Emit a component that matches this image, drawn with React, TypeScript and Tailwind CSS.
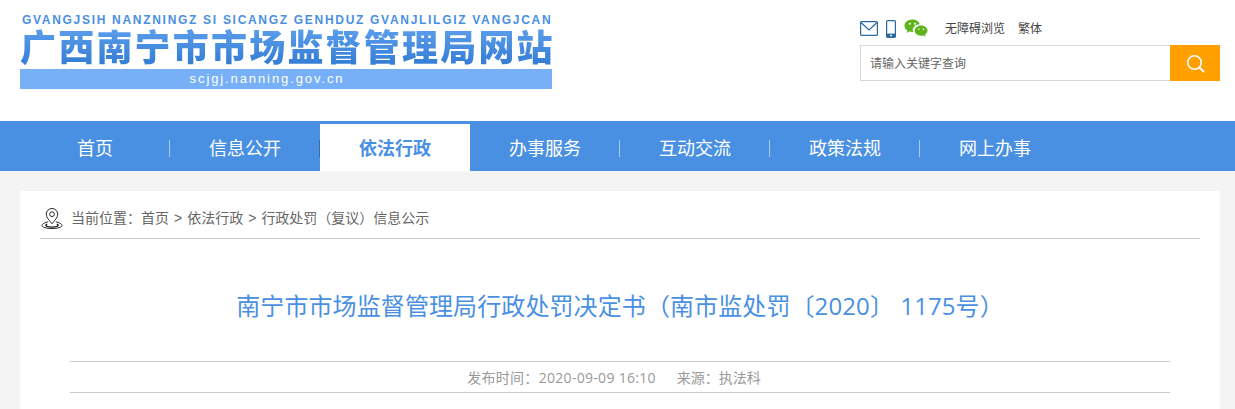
import React from 'react';

const cjk = "font-['Liberation_Sans','Noto_Sans_CJK_SC',sans-serif]";
const wide = "font-['Open_Sans','Noto_Sans_CJK_SC',sans-serif]";

const navItems = ['首页', '信息公开', '依法行政', '办事服务', '互动交流', '政策法规', '网上办事'];

const MailIcon = () => (
  <svg width="18" height="15" viewBox="0 0 18 15" fill="none" stroke="#2a6a9e" strokeWidth="1.2">
    <rect x="0.6" y="0.6" width="16.8" height="13.8" rx="1" />
    <path d="M1 1.5 L9 9 L17 1.5" />
  </svg>
);

const PhoneIcon = () => (
  <svg width="10" height="18" viewBox="0 0 10 18" fill="none">
    <rect x="0.6" y="0.6" width="8.8" height="16.8" rx="1.2" stroke="#2a6a9e" strokeWidth="1.2" />
    <rect x="0.6" y="13.6" width="8.8" height="3.8" fill="#2a6a9e" />
    <circle cx="5" cy="15.5" r="0.9" fill="#fff" />
  </svg>
);

const WechatIcon = () => (
  <svg width="24" height="19" viewBox="0 0 24 19">
    <path d="M8.5 0.5C4 0.5 0.5 3.3 0.5 6.8c0 2 1.2 3.7 3 4.9l-0.8 2.3 2.8-1.4c1 0.3 2 0.4 3 0.4h0.6c-0.2-0.6-0.3-1.2-0.3-1.8 0-3.3 3.1-5.9 7-6C14.900 2.500 12 0.500 8.500 0.500z" fill="#5fb41c" />
    <path d="M23.500 11.600c0-2.900-2.900-5.200-6.400-5.200s-6.400 2.300-6.400 5.200 2.900 5.200 6.400 5.200c0.800 0 1.500-0.100 2.200-0.300l2.200 1.300-0.600-2c1.600-1 2.600-2.500 2.600-4.200z" fill="#5fb41c" />
    <circle cx="5.800" cy="4.800" r="1" fill="#fff" />
    <circle cx="11" cy="4.800" r="1" fill="#fff" />
    <circle cx="14.800" cy="10.200" r="0.8" fill="#fff" />
    <circle cx="19.400" cy="10.200" r="0.8" fill="#fff" />
  </svg>
);

const PinIcon = () => (
  <svg width="22" height="21" viewBox="0 0 23 22" fill="none" stroke="#222" strokeWidth="1">
    <path d="M11.500 16.500C9 13 5.500 10.500 5.500 6.500a6 6 0 0 1 12 0c0 4-3.500 6.500-6 10z" />
    <circle cx="11.500" cy="6.500" r="2.500" />
    <path d="M7.500 14.500C4 15.300 1 16.500 1 18.300c0 2 4.700 3.200 10.500 3.200S22 20.300 22 18.300c0-1.800-3-3-6.500-3.800" />
    <path d="M6.500 17c-1 .4-1.500.8-1.500 1.200 0 1 3 1.800 6.500 1.800s6.500-.8 6.500-1.800c0-.4-.5-.8-1.500-1.200" strokeWidth="1.500" />
  </svg>
);

const SearchIcon = () => (
  <svg width="19" height="19" viewBox="0 0 19 19" fill="none" stroke="#fff" strokeWidth="1.600" strokeLinecap="round">
    <circle cx="8.500" cy="8.500" r="6.800" />
    <path d="M13.500 13.500 L17.500 17.500" strokeWidth="2" />
  </svg>
);

export default function App() {
  return (
    <div className={`h-[409px] overflow-hidden bg-[#f4f4f4] ${cjk}`}>
      <header className="h-[121px] bg-white flex justify-between pl-5 pr-[15px]">
        <div className="w-[532px] pt-[13px]">
          <div className="h-[14px] pl-[2px] leading-[14px] text-[12px] font-bold text-[#4a90e2] tracking-[1.7px] whitespace-nowrap">
            GVANGJSIH NANZNINGZ SI SICANGZ GENHDUZ GVANJLILGIZ VANGJCAN
          </div>
          <div className="h-[42px] leading-[44px] text-[36px] font-black tracking-[2.2px] whitespace-nowrap bg-gradient-to-b from-[#5c9fec] to-[#2f79d2] bg-clip-text text-transparent">
            广西南宁市市场监督管理局网站
          </div>
          <div className="h-5 leading-5 pr-[38px] bg-[#78b0f7] text-white text-center text-[13px] font-medium tracking-[1.9px]">
            scjgj.nanning.gov.cn
          </div>
        </div>
        <div className="w-[360px] pt-5">
          <div className="h-[17px] flex items-center text-[12px] text-[#444]">
            <MailIcon />
            <span className="ml-[8px] flex"><PhoneIcon /></span>
            <span className="ml-[8px] flex"><WechatIcon /></span>
            <span className="ml-[17px]">无障碍浏览</span>
            <span className="ml-[13px]">繁体</span>
          </div>
          <div className="mt-2 h-9 flex">
            <div className="flex-1 border border-[#d8d8d8] border-r-0 flex items-center pl-[9px] pt-px text-[12px] text-[#666]">
              请输入关键字查询
            </div>
            <button className="w-[50px] bg-[#ff9f00] flex items-center justify-center">
              <SearchIcon />
            </button>
          </div>
        </div>
      </header>

      <nav className="h-[50px] bg-[#4a90e2] flex pl-5">
        {navItems.map((item, i) => (
          <div key={item} className="relative w-[150px] h-full">
            {i === 2 ? (
              <div className="mt-[3px] h-[47px] pt-[4px] bg-white flex items-center justify-center text-[18px] font-bold text-[#4a90e2]">
                {item}
              </div>
            ) : (
              <div className="h-full pt-[7px] flex items-center justify-center text-[18px] text-white">{item}</div>
            )}
            {i < 6 && i !== 2 && (
              <span className={`absolute right-0 top-[19px] h-[17px] w-px ${i === 1 ? 'bg-[#3a6ea8]' : 'bg-[#a9cbf2]'}`} />
            )}
          </div>
        ))}
      </nav>

      <main className="mt-5 ml-5 mr-[15px] bg-white px-5 h-[300px]">
        <div className="h-[48px] pt-[7px] border-b border-[#ccc] flex items-center text-[14px] text-[#666]">
          <span className="ml-px flex"><PinIcon /></span>
          <span className="ml-2 flex">
            <span>当前位置：首页</span>
            <span className="mx-[5px]">&gt;</span>
            <span>依法行政</span>
            <span className="mx-[5px]">&gt;</span>
            <span>行政处罚（复议）信息公示</span>
          </span>
        </div>
        <div className="mx-[30px]">
          <h1 className={`h-[123px] border-b border-[#ccc] flex items-center justify-center pt-[11px] text-[24px] tracking-[0.1px] text-[#4a90e2] ${wide}`}>
            南宁市市场监督管理局行政处罚决定书（南市监处罚〔2020〕 1175号）
          </h1>
          <div className={`h-[31px] pr-[12px] border-b border-[#ccc] flex items-center justify-center text-[14px] text-[#999] ${wide}`}>
            <span className="tracking-[0.3px]">发布时间：2020-09-09 16:10</span>
            <span className="ml-[21px]">来源：执法科</span>
          </div>
        </div>
      </main>
    </div>
  );
}
